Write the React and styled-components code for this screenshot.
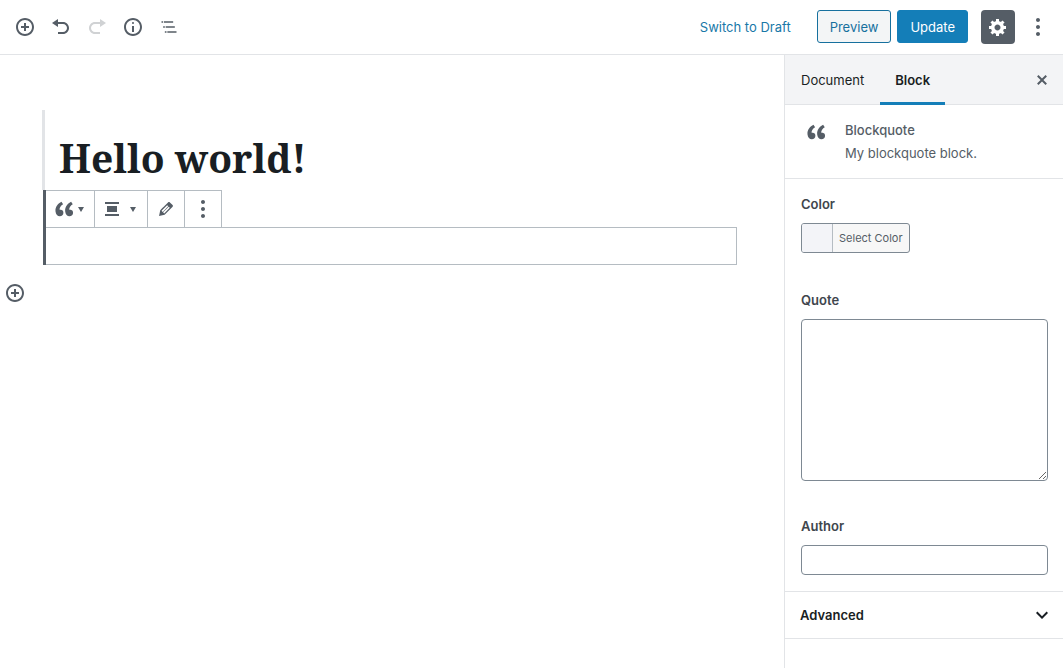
import React from 'react';
import styled, { createGlobalStyle } from 'styled-components';

const GlobalStyle = createGlobalStyle`
	* {
		box-sizing: border-box;
	}

	body {
		margin: 0;
		font-family: Inter, "Liberation Sans", sans-serif;
		font-size: 13px;
		line-height: 18px;
		color: #191e23;
		background-color: #fff;
	}

	button, input, textarea {
		margin: 0;
		font: inherit;
	}
`;

const paths = {
	insert: 'M10 1c-5 0-9 4-9 9s4 9 9 9 9-4 9-9-4-9-9-9zm0 16c-3.9 0-7-3.1-7-7s3.1-7 7-7 7 3.1 7 7-3.1 7-7 7zm1-11H9v3H6v2h3v3h2v-3h3V9h-3V6z',
	undo: 'M12 5H7V2L1 6l6 4V7h5c2.2 0 4 1.8 4 4s-1.8 4-4 4H7v2h5c3.3 0 6-2.7 6-6s-2.7-6-6-6z',
	redo: 'M8 5h5V2l6 4-6 4V7H8c-2.2 0-4 1.8-4 4s1.8 4 4 4h5v2H8c-3.3 0-6-2.7-6-6s2.7-6 6-6z',
	info: 'M9 15h2V9H9v6zm1-10c-.5 0-1 .5-1 1s.5 1 1 1 1-.5 1-1-.5-1-1-1zm0-4c-5 0-9 4-9 9s4 9 9 9 9-4 9-9-4-9-9-9zm0 16c-3.9 0-7-3.1-7-7s3.1-7 7-7 7 3.1 7 7-3.1 7-7 7z',
	outline: 'M5 5H3v2h2V5zm3 8h11v-2H8v2zm9-8H6v2h11V5zM7 11H5v2h2v-2zm0 8h2v-2H7v2zm3-2v2h11v-2H10z',
	settings: 'M18 12h-2.18c-.17.7-.44 1.35-.81 1.93l1.54 1.54-2.1 2.1-1.54-1.54c-.58.36-1.23.63-1.91.79V19H8v-2.18c-.68-.16-1.33-.43-1.91-.79l-1.54 1.54-2.12-2.12 1.54-1.54c-.36-.58-.63-1.23-.79-1.91H1V9.03h2.17c.16-.7.44-1.35.8-1.94L2.43 5.55l2.1-2.1 1.54 1.54c.58-.37 1.24-.64 1.93-.81V2h3v2.18c.68.16 1.33.43 1.91.79l1.54-1.54 2.12 2.12-1.54 1.54c.36.59.64 1.24.8 1.94H18V12zm-8.5 1.5c1.66 0 3-1.34 3-3s-1.34-3-3-3-3 1.34-3 3 1.34 3 3 3z',
	more: 'M10 5c1.1 0 2-.9 2-2s-.9-2-2-2-2 .9-2 2 .9 2 2 2zm0 7c1.1 0 2-.9 2-2s-.9-2-2-2-2 .9-2 2 .9 2 2 2zm0 7c1.1 0 2-.9 2-2s-.9-2-2-2-2 .9-2 2 .9 2 2 2z',
	quote: 'M9.49 13.22c0-.74-.2-1.38-.61-1.9-.62-.78-1.83-.88-2.53-.72-.29-1.65 1.11-3.75 2.92-4.65L7.88 4c-2.73 1.3-5.42 4.28-4.96 8.05C3.21 14.43 4.59 16 6.54 16c.85 0 1.56-.25 2.12-.75s.83-1.18.83-2.03zm8.05 0c0-.74-.2-1.38-.61-1.9-.63-.78-1.83-.88-2.53-.72-.29-1.65 1.11-3.75 2.92-4.65L15.93 4c-2.73 1.3-5.41 4.28-4.95 8.05.29 2.38 1.66 3.95 3.61 3.95.85 0 1.56-.25 2.12-.75s.83-1.18.83-2.03z',
	align: 'M3 5h14V3H3v2zm12 8V7H5v6h10zM3 17h14v-2H3v2z',
	edit: 'M13.89 3.39l2.71 2.72c.46.46.42 1.24.03 1.64l-8.01 8.02-5.56 1.16 1.16-5.58s7.6-7.63 7.99-8.03c.39-.39 1.22-.39 1.68.07zm-2.73 2.79l-5.59 5.61 1.11 1.11 5.54-5.65zm-2.97 8.23l5.58-5.6-1.07-1.08-5.59 5.6z',
	close: 'M14.95 6.46L11.41 10l3.54 3.54-1.41 1.41L10 11.42l-3.53 3.53-1.42-1.42L8.58 10 5.05 6.47l1.42-1.42L10 8.58l3.54-3.53z',
	chevron: 'M7.41 8.59L12 13.17l4.59-4.58L18 10l-6 6-6-6 1.41-1.41z',
	caret: 'M0 0h6L3 5z'
};

const Svg = styled.svg`
	display: block;
	flex: none;
	fill: currentColor;
`;

const Icon = ({ type, size = 20, box = '0 0 20 20' }) => (
	<Svg width={size} height={size} viewBox={box} aria-hidden="true">
		<path d={paths[type]} />
	</Svg>
);

const Caret = () => (
	<Svg width="6" height="5" viewBox="0 0 6 5" aria-hidden="true">
		<path d={paths.caret} />
	</Svg>
);

const Page = styled.div`
	display: flex;
	flex-direction: column;
	min-height: 100vh;
`;

const Header = styled.header`
	display: flex;
	justify-content: space-between;
	align-items: center;
	height: 55px;
	padding: 0 7px;
	border-bottom: 1px solid #e2e4e7;
`;

const Group = styled.div`
	display: flex;
	align-items: center;
`;

const IconButton = styled.button`
	display: flex;
	justify-content: center;
	align-items: center;
	width: 36px;
	height: 36px;
	padding: 0;
	color: #555d66;
	background: none;
	border: 0;
	border-radius: 4px;

	&:disabled {
		color: #d0d2d4;
	}
`;

const SettingsButton = styled(IconButton)`
	width: 34px;
	height: 34px;
	margin: 0 5px 0 13px;
	color: #fff;
	background-color: #555d66;
`;

const Actions = styled.div`
	display: flex;
	align-items: center;
	gap: 6px;
	height: 34px;
`;

const TextButton = styled.button`
	align-self: flex-start;
	height: 33px;
	padding: 0 12px;
	color: ${props => (props.$primary ? '#fff' : '#16709e')};
	background-color: ${props => (props.$primary ? '#147eb8' : '#f3f5f6')};
	border: 1px solid ${props => (props.$primary ? '#147eb8' : '#16709e')};
	border-radius: 3px;
`;

const LinkButton = styled.button`
	margin-right: 20px;
	padding: 0;
	color: #1878a8;
	background: none;
	border: 0;
`;

const Body = styled.div`
	flex: 1;
	display: flex;
`;

const Canvas = styled.main`
	flex: 1;
	padding-top: 55px;
`;

const Blocks = styled.div`
	margin: 0 47px 0 42px;
`;

const Title = styled.h1`
	height: 80px;
	margin: 0;
	padding: 20px 14px 0;
	font-family: "Noto Serif", "Liberation Serif", serif;
	font-size: 39px;
	font-weight: 700;
	line-height: 56px;
	border-left: 3px solid #e2e4e7;
`;

const SelectedBlock = styled.section`
	margin-left: 1px;
	border-left: 3px solid #555d66;
`;

const Toolbar = styled.div`
	display: flex;
	width: max-content;
	height: 37px;
	border-top: 1px solid #b5bcc2;
`;

const ToolButton = styled.button`
	display: flex;
	justify-content: center;
	align-items: center;
	width: 37px;
	padding: 0;
	color: #555d66;
	background: none;
	border: 0;
	border-right: 1px solid #b5bcc2;
`;

const DropdownButton = styled(ToolButton)`
	gap: ${props => props.$gap}px;
	width: ${props => props.$width}px;
	padding-right: 4px;
`;

const BlockContent = styled.div`
	height: 38px;
	border: 1px solid #b5bcc2;
	border-left: 0;
`;

const AppenderRow = styled.div`
	display: flex;
	padding: 10px 0 0;

	button {
		width: 30px;
	}
`;

const Sidebar = styled.aside`
	flex: none;
	width: 279px;
	color: #555d66;
	border-left: 1px solid #e2e4e7;
`;

const Tabs = styled.div`
	display: flex;
	height: 50px;
	padding-right: 3px;
	background-color: #f3f4f6;
	border-bottom: 1px solid #e2e4e7;

	${IconButton} {
		align-self: center;
		margin-left: auto;
	}
`;

const Tab = styled.button`
	height: 50px;
	padding: 3px ${props => (props.$active ? 15 : 16)}px 0;
	color: #191e23;
	font-weight: ${props => (props.$active ? 600 : 400)};
	background: none;
	border: 0;
	border-bottom: 3px solid ${props => (props.$active ? '#147eb8' : 'transparent')};
`;

const Card = styled.div`
	display: flex;
	gap: 17px;
	padding: 15px 16px 16px 19px;
	border-bottom: 1px solid #e2e4e7;
`;

const CardTitle = styled.h2`
	margin: 0 0 4px;
	font-size: 13px;
	font-weight: 500;
	line-height: 20px;
`;

const CardText = styled.p`
	margin: 0;
`;

const Fields = styled.div`
	display: flex;
	flex-direction: column;
	gap: 36px;
	padding: 16px 15px 16px 16px;
	border-bottom: 1px solid #e2e4e7;
`;

const Field = styled.div`
	display: flex;
	flex-direction: column;
	align-items: flex-start;
	gap: 10px;
`;

const Label = styled.label`
	color: #40464d;
	font-weight: 600;
`;

const ColorButton = styled.button`
	display: flex;
	height: 30px;
	margin-bottom: 2px;
	padding: 0;
	color: #555d66;
	font-size: 11px;
	line-height: 28px;
	background-color: #f7f7f7;
	border: 1px solid #7e8993;
	border-radius: 3px;
	overflow: hidden;
`;

const Swatch = styled.span`
	width: 31px;
	height: 28px;
	background-color: #f3f4f8;
	border-right: 1px solid #b5bcc2;
`;

const ColorText = styled.span`
	padding: 0 6px;
`;

const TextArea = styled.textarea`
	display: block;
	width: 100%;
	height: 162px;
	padding: 6px 8px;
	background-color: #fff;
	border: 1px solid #7e8993;
	border-radius: 4px;
	resize: vertical;
`;

const TextInput = styled.input`
	width: 100%;
	height: 30px;
	padding: 0 8px;
	background-color: #fff;
	border: 1px solid #7e8993;
	border-radius: 4px;
`;

const PanelToggle = styled.button`
	display: flex;
	justify-content: space-between;
	align-items: center;
	width: 100%;
	height: 47px;
	padding: 0 9px 0 15px;
	color: #191e23;
	font-weight: 600;
	background: none;
	border: 0;
	border-bottom: 1px solid #e2e4e7;
`;

const EditorHeader = () => (
	<Header>
		<Group>
			<IconButton aria-label="Add block"><Icon type="insert" /></IconButton>
			<IconButton aria-label="Undo"><Icon type="undo" /></IconButton>
			<IconButton aria-label="Redo" disabled><Icon type="redo" /></IconButton>
			<IconButton aria-label="Content structure"><Icon type="info" /></IconButton>
			<IconButton aria-label="Block navigation"><Icon type="outline" box="0 0 24 24" /></IconButton>
		</Group>
		<Group>
			<Actions>
				<LinkButton>Switch to Draft</LinkButton>
				<TextButton>Preview</TextButton>
				<TextButton $primary>Update</TextButton>
			</Actions>
			<SettingsButton aria-label="Settings"><Icon type="settings" /></SettingsButton>
			<IconButton aria-label="More tools"><Icon type="more" /></IconButton>
		</Group>
	</Header>
);

const BlockToolbar = () => (
	<Toolbar>
		<DropdownButton $width={49} $gap={2} aria-label="Change block type">
			<Icon type="quote" size={24} />
			<Caret />
		</DropdownButton>
		<DropdownButton $width={53} $gap={8} aria-label="Change alignment">
			<Icon type="align" />
			<Caret />
		</DropdownButton>
		<ToolButton aria-label="Edit"><Icon type="edit" /></ToolButton>
		<ToolButton aria-label="More options"><Icon type="more" /></ToolButton>
	</Toolbar>
);

const BlockSettings = () => (
	<Sidebar>
		<Tabs>
			<Tab>Document</Tab>
			<Tab $active>Block</Tab>
			<IconButton aria-label="Close settings"><Icon type="close" /></IconButton>
		</Tabs>
		<Card>
			<Icon type="quote" size={24} />
			<div>
				<CardTitle>Blockquote</CardTitle>
				<CardText>My blockquote block.</CardText>
			</div>
		</Card>
		<Fields>
			<Field>
				<Label htmlFor="color">Color</Label>
				<ColorButton id="color">
					<Swatch />
					<ColorText>Select Color</ColorText>
				</ColorButton>
			</Field>
			<Field>
				<Label htmlFor="quote">Quote</Label>
				<TextArea id="quote" />
			</Field>
			<Field>
				<Label htmlFor="author">Author</Label>
				<TextInput id="author" type="text" />
			</Field>
		</Fields>
		<PanelToggle>
			Advanced
			<Icon type="chevron" size={24} box="0 0 24 24" />
		</PanelToggle>
	</Sidebar>
);

const App = () => (
	<Page>
		<GlobalStyle />
		<EditorHeader />
		<Body>
			<Canvas>
				<Blocks>
					<Title>Hello world!</Title>
					<SelectedBlock>
						<BlockToolbar />
						<BlockContent />
					</SelectedBlock>
				</Blocks>
				<AppenderRow>
					<IconButton aria-label="Add block"><Icon type="insert" /></IconButton>
				</AppenderRow>
			</Canvas>
			<BlockSettings />
		</Body>
	</Page>
);

export default App;
